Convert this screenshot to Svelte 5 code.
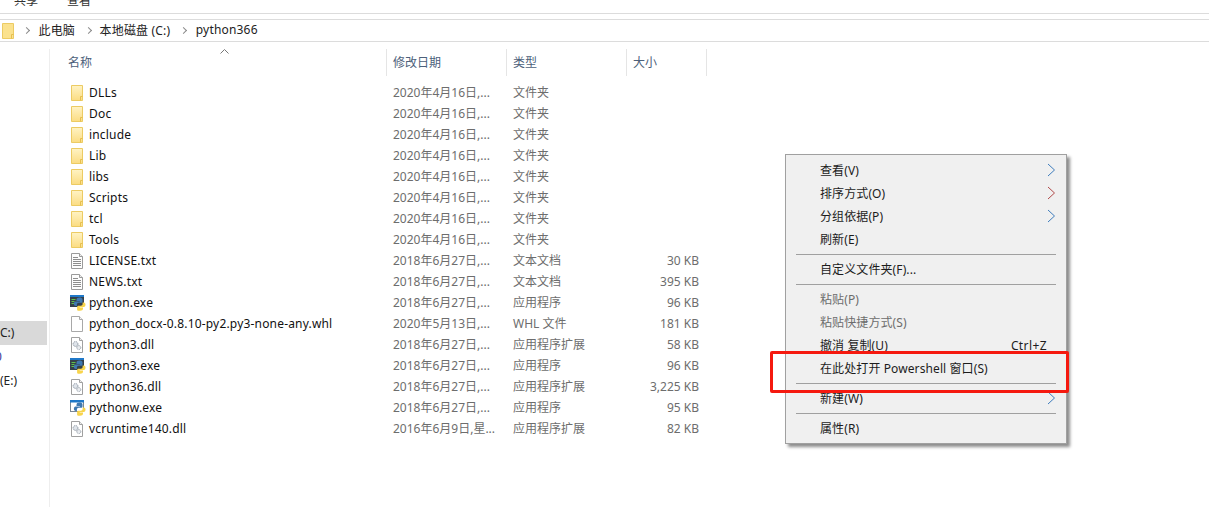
<script>
  const folderDate = '2020年4月16日,...';
  const relDate = '2018年6月27日,...';
  const files = [
    { name: 'DLLs', date: folderDate, type: '文件夹', size: '', icon: 'folder' },
    { name: 'Doc', date: folderDate, type: '文件夹', size: '', icon: 'folder' },
    { name: 'include', date: folderDate, type: '文件夹', size: '', icon: 'folder' },
    { name: 'Lib', date: folderDate, type: '文件夹', size: '', icon: 'folder' },
    { name: 'libs', date: folderDate, type: '文件夹', size: '', icon: 'folder' },
    { name: 'Scripts', date: folderDate, type: '文件夹', size: '', icon: 'folder' },
    { name: 'tcl', date: folderDate, type: '文件夹', size: '', icon: 'folder' },
    { name: 'Tools', date: folderDate, type: '文件夹', size: '', icon: 'folder' },
    { name: 'LICENSE.txt', date: relDate, type: '文本文档', size: '30 KB', icon: 'txt' },
    { name: 'NEWS.txt', date: relDate, type: '文本文档', size: '395 KB', icon: 'txt' },
    { name: 'python.exe', date: relDate, type: '应用程序', size: '96 KB', icon: 'exe' },
    { name: 'python_docx-0.8.10-py2.py3-none-any.whl', date: '2020年5月13日,...', type: 'WHL 文件', size: '181 KB', icon: 'blank' },
    { name: 'python3.dll', date: relDate, type: '应用程序扩展', size: '58 KB', icon: 'dll' },
    { name: 'python3.exe', date: relDate, type: '应用程序', size: '96 KB', icon: 'exe' },
    { name: 'python36.dll', date: relDate, type: '应用程序扩展', size: '3,225 KB', icon: 'dll' },
    { name: 'pythonw.exe', date: relDate, type: '应用程序', size: '95 KB', icon: 'exew' },
    { name: 'vcruntime140.dll', date: '2016年6月9日,星...', type: '应用程序扩展', size: '82 KB', icon: 'dll' }
  ];
  const menu = [
    { label: '查看(V)', arrow: 'blue' },
    { label: '排序方式(O)', arrow: 'red' },
    { label: '分组依据(P)', arrow: 'blue' },
    { label: '刷新(E)' },
    { sep: true },
    { label: '自定义文件夹(F)...' },
    { sep: true },
    { label: '粘贴(P)', off: true },
    { label: '粘贴快捷方式(S)', off: true },
    { label: '撤消 复制(U)', key: 'Ctrl+Z' },
    { label: '在此处打开 Powershell 窗口(S)' },
    { sep: true },
    { label: '新建(W)', arrow: 'blue' },
    { sep: true },
    { label: '属性(R)' }
  ];
</script>

{#snippet folderIcon()}
  <svg class="ico" width="16" height="16" viewBox="1 0 16 16">
    <defs>
      <linearGradient id="fg" x1="0" y1="0" x2="0" y2="1">
        <stop offset="0" stop-color="#fff3c4" />
        <stop offset="1" stop-color="#fbdc82" />
      </linearGradient>
    </defs>
    <path d="M2.500.5h11v15h-11z" fill="url(#fg)" stroke="#eccb63" />
    <path d="M11.500 15.500v-4h2" fill="none" stroke="#e6bf4f" />
  </svg>
{/snippet}

{#snippet txtIcon()}
  <svg class="ico" width="16" height="16" viewBox="1 0 16 16">
    <path d="M2.500.5h8l3 3v12h-11z" fill="#fdfdfd" stroke="#9a9a9a" />
    <path d="M10.500.5v3h3" fill="#eee" stroke="#9a9a9a" />
    <path d="M4 4.500h5M4 6.500h8M4 8.500h8M4 10.500h8M4 12.500h8" stroke="#8d8d8d" />
  </svg>
{/snippet}

{#snippet blankIcon()}
  <svg class="ico" width="16" height="16" viewBox="1 0 16 16">
    <path d="M2.500.5h8l3 3v12h-11z" fill="#fff" stroke="#a8a8a8" />
    <path d="M10.500.5v3h3" fill="#f2f2f2" stroke="#a8a8a8" />
  </svg>
{/snippet}

{#snippet dllIcon()}
  <svg class="ico" width="16" height="16" viewBox="1 0 16 16">
    <path d="M2.500.5h8l3 3v12h-11z" fill="#fff" stroke="#a0a0a0" />
    <path d="M10.500.5v3h3" fill="#eee" stroke="#a0a0a0" />
    <circle cx="6.500" cy="7" r="2.400" fill="#dfe4ea" stroke="#8f99a5" stroke-dasharray="1.400 .7" />
    <circle cx="9.800" cy="10.600" r="2" fill="#e8ebef" stroke="#9aa3ad" stroke-dasharray="1.200 .6" />
  </svg>
{/snippet}

{#snippet snake()}
  <path d="M9.500 2.500c-2 0-3 .8-3 2.200v1.200h3.400v.6H5.500c-1 0-1.600 1-1.600 2.500 0 1.300.8 2 2 2h1V9.500c0-1 .8-1.700 1.800-1.700h2.400c.8 0 1.400-.6 1.400-1.400V4.200c0-1-1.300-1.700-3-1.700z" fill="#3f78b0" />
  <path d="M10 15.800c1.900 0 3-.7 3-2v-1.200H9.700V12h4.200c1 0 1.600-1 1.600-2.400 0-1.300-.7-2-1.900-2h-1V9c0 1-.8 1.700-1.800 1.700H8.500c-.8 0-1.400.6-1.400 1.400v2.600c0 1 1.200 1.100 2.900 1.100z" fill="#f8d44c" />
{/snippet}

{#snippet exeIcon()}
  <svg class="ico" width="16" height="16" viewBox="0 0 16 16">
    <rect x="0" y="0" width="14" height="12" fill="#35404a" />
    <rect x="0" y="0" width="14" height="2" fill="#1f78c8" />
    <path d="M1.500 4.500h4M1.500 6.500h3M1.500 8.500h4" stroke="#5fc24a" />
    {@render snake()}
  </svg>
{/snippet}

{#snippet exewIcon()}
  <svg class="ico" width="16" height="16" viewBox="0 0 16 16">
    <rect x=".5" y=".5" width="13" height="11" fill="#fff" stroke="#7a8794" />
    <rect x="0" y="0" width="14" height="2.500" fill="#1f78c8" />
    {@render snake()}
  </svg>
{/snippet}

<div class="window">
  <div class="ribbon">
    <span class="tab first">共享</span>
    <span class="tab">查看</span>
  </div>

  <div class="crumbs">
    <svg class="crumb-folder" width="16" height="16" viewBox="0 0 16 16">
      <path d="M2.500.5h11v15h-11z" fill="#fbe28e" stroke="#eccb63" />
      <path d="M11.500 15.500v-4h2" fill="none" stroke="#e6bf4f" />
    </svg>
    <span class="chev ch1"></span><span class="crumb c1">此电脑</span>
    <span class="chev ch2"></span><span class="crumb c2">本地磁盘 (C:)</span>
    <span class="chev ch3"></span><span class="crumb c3">python366</span>
  </div>

  <div class="body">
    <nav class="nav">
      <div class="nav-row selected">C:)</div>
      <div class="nav-row mark"><span>0</span></div>
      <div class="nav-row">(E:)</div>
    </nav>

    <section class="list">
      <svg class="sort" width="9" height="5" viewBox="0 0 9 5">
        <path d="M.5 4.500l4-4 4 4" fill="none" stroke="#777" />
      </svg>
      <div class="head">
        <div class="hcell name-head">名称</div>
        <div class="hcell">修改日期</div>
        <div class="hcell">类型</div>
        <div class="hcell">大小</div>
      </div>

      <div class="rows">
        {#each files as f}
          <div class="row">
            <div class="cell-name">
              {#if f.icon === 'folder'}{@render folderIcon()}
              {:else if f.icon === 'txt'}{@render txtIcon()}
              {:else if f.icon === 'blank'}{@render blankIcon()}
              {:else if f.icon === 'dll'}{@render dllIcon()}
              {:else if f.icon === 'exe'}{@render exeIcon()}
              {:else}{@render exewIcon()}{/if}
              <span>{f.name}</span>
            </div>
            <div class="cell">{f.date}</div>
            <div class="cell">{f.type}</div>
            <div class="cell size">{f.size}</div>
          </div>
        {/each}
      </div>
    </section>
  </div>

  <div class="menu">
    {#each menu as m}
      {#if m.sep}
        <div class="sep"></div>
      {:else}
        <div class="item" class:off={m.off}>
          <span>{m.label}</span>
          {#if m.key}<span class="key">{m.key}</span>{/if}
          {#if m.arrow}
            <svg class="arrow {m.arrow}" width="9" height="14" viewBox="0 0 9 14">
              <path d="M1 1l6.500 6-6.500 6" fill="none" stroke="currentColor" />
            </svg>
          {/if}
        </div>
      {/if}
    {/each}
  </div>

  <div class="redbox"></div>
</div>

<style>
  :global(body) {
    margin: 0;
    background: #fff;
  }
  .window {
    position: relative;
    width: 1209px;
    height: 507px;
    overflow: hidden;
    background: #fff;
    font-family: "Noto Sans", "Noto Sans CJK SC", sans-serif;
    font-size: 12px;
    color: #1a1a1a;
  }
  .ribbon {
    height: 13px;
    border-bottom: 1px solid #dcdcdc;
    display: flex;
    overflow: hidden;
    align-items: flex-end;
    line-height: 18px;
  }
  .tab {
    height: 18px;
    flex: none;
    margin-bottom: 3px;
    margin-left: 29px;
    color: #333;
  }
  .tab.first {
    margin-left: 14px;
  }
  .crumbs {
    margin-top: 5px;
    height: 21px;
    border-top: 1px solid #dcdcdc;
    border-bottom: 1px solid #dcdcdc;
    display: flex;
    align-items: center;
    color: #222;
    letter-spacing: 0.18px;
  }
  .crumb-folder {
    flex: none;
  }
  .chev {
    width: 4px;
    height: 4px;
    border-top: 1.500px solid #8a8a8a;
    border-right: 1.500px solid #8a8a8a;
    transform: rotate(45deg);
    flex: none;
  }
  .ch1 { margin-left: 8px; }
  .ch2 { margin-left: 10.500px; }
  .ch3 { margin-left: 10.500px; }
  .crumb {
    flex: none;
    margin-top: -2px;
  }
  .c1 { margin-left: 9.500px; }
  .c2 { margin-left: 9px; }
  .c3 { margin-left: 10px; }
  .body {
    display: flex;
    height: 465px;
  }
  .nav {
    width: 49px;
    flex: none;
    padding-top: 279px;
    box-sizing: border-box;
    line-height: 24px;
  }
  .nav-row {
    width: 47px;
    height: 24px;
    overflow: hidden;
    color: #222;
  }
  .nav-row.selected {
    background: #d9d9d9;
  }
  .nav-row.mark {
    color: #3a3a9a;
  }
  .nav-row.mark span {
    margin-left: -5px;
  }
  .list {
    position: relative;
    flex: 1;
    margin-top: 7px;
    border-left: 1px solid #eeeeee;
  }
  .sort {
    position: absolute;
    left: 170px;
    top: 0;
  }
  .head {
    display: grid;
    grid-template-columns: 336px 120px 120px 81px;
    height: 27px;
    width: 657px;
  }
  .hcell {
    padding-left: 6px;
    line-height: 27px;
    color: #4c607a;
    border-left: 1px solid #e5e5e5;
  }
  .hcell.name-head {
    border-left: none;
    padding-left: 18px;
  }
  .hcell:last-child {
    border-right: 1px solid #e5e5e5;
  }
  .rows {
    padding-top: 6px;
  }
  .row {
    display: grid;
    grid-template-columns: 336px 120px 120px 80px;
    width: 656px;
    height: 21px;
    line-height: 21px;
  }
  .cell-name {
    display: flex;
    align-items: center;
    gap: 3px;
    padding-left: 20px;
    color: #111;
    white-space: nowrap;
    letter-spacing: 0.18px;
  }
  .cell-name .ico {
    flex: none;
  }
  .cell {
    padding-left: 7px;
    color: #6d6d6d;
    white-space: nowrap;
  }
  .cell.size {
    padding: 0 7px 0 0;
    text-align: right;
  }
  .menu {
    position: absolute;
    left: 785px;
    top: 154px;
    width: 280px;
    padding-top: 4px;
    height: 284px;
    background: #f0f0f0;
    border: 1px solid #a0a0a0;
    box-shadow: 3px 3px 3px rgba(0, 0, 0, 0.45);
    letter-spacing: 0.1px;
  }
  .item {
    position: relative;
    height: 23px;
    line-height: 23px;
    padding-left: 34px;
    color: #1c1c1c;
    white-space: nowrap;
  }
  .item.off {
    color: #6d6d6d;
  }
  .key {
    position: absolute;
    right: 19px;
    top: 0;
    letter-spacing: 0.4px;
  }
  .arrow {
    position: absolute;
    right: 10px;
    top: 4px;
  }
  .arrow.blue { color: #3f7dbd; }
  .arrow.red { color: #b04a4a; }
  .sep {
    height: 1px;
    margin: 3px 10px;
    background: #a0a0a0;
  }
  .redbox {
    position: absolute;
    left: 770px;
    top: 351px;
    width: 293px;
    height: 36px;
    border: 3px solid #f5190f;
    border-radius: 2px;
  }
</style>
